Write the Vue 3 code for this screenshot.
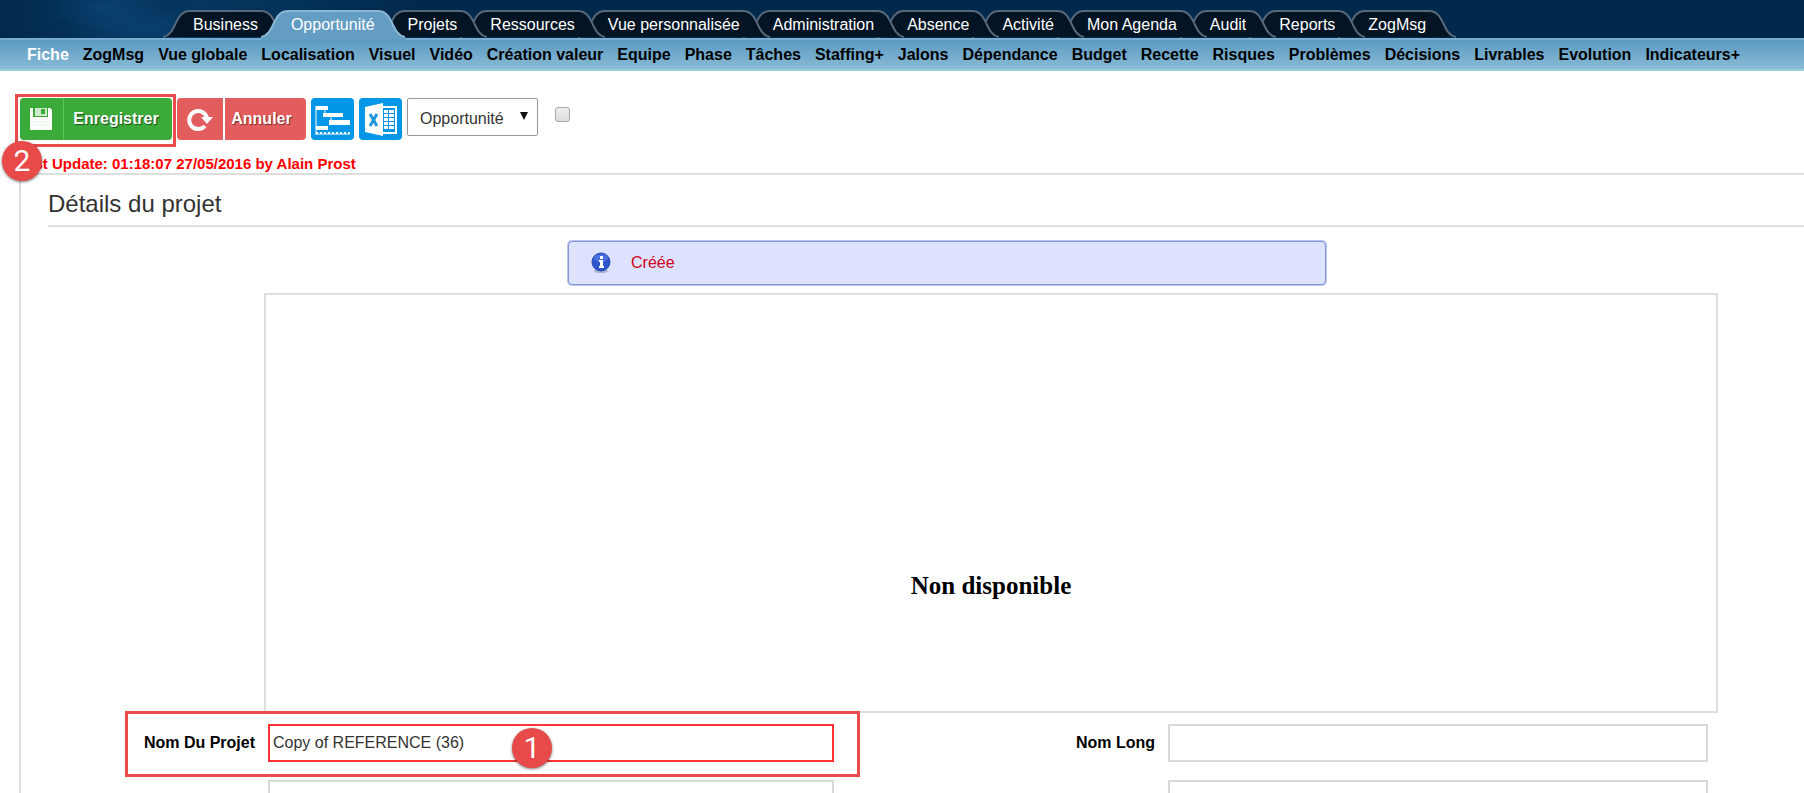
<script setup>
import { ref } from 'vue'

const tabs = ['Business', 'Opportunité', 'Projets', 'Ressources', 'Vue personnalisée', 'Administration', 'Absence', 'Activité', 'Mon Agenda', 'Audit', 'Reports', 'ZogMsg']
const activeTab = ref('Opportunité')

const links = ['Fiche', 'ZogMsg', 'Vue globale', 'Localisation', 'Visuel', 'Vidéo', 'Création valeur', 'Equipe', 'Phase', 'Tâches', 'Staffing+', 'Jalons', 'Dépendance', 'Budget', 'Recette', 'Risques', 'Problèmes', 'Décisions', 'Livrables', 'Evolution', 'Indicateurs+']
const activeLink = ref('Fiche')

const kind = ref('Opportunité')
const checked = ref(false)
const projectName = ref('Copy of REFERENCE (36)')
const longName = ref('')
</script>

<template>
  <div class="page">
    <header class="top">
      <nav class="tabs" aria-label="Modules">
        <a
          v-for="(tab, i) in tabs"
          :key="tab"
          href="#"
          class="tab"
          :class="{ active: tab === activeTab }"
          :style="{ zIndex: tab === activeTab ? 20 : tabs.length - i }"
          @click.prevent="activeTab = tab"
        >
          <svg class="cap" width="30" height="30" viewBox="0 0 30 30" aria-hidden="true">
            <path class="fill" d="M0 27 C14 25 11 1 27 1 H30 V27 H0 Z" />
            <path v-if="tab === activeTab" class="fill" d="M0 27H30V30H0Z" />
            <path class="edge" d="M0 27 C14 25 11 1 27 1 H30" />
          </svg>
          <span class="tab-text">{{ tab }}</span>
          <svg class="cap" width="30" height="30" viewBox="0 0 30 30" aria-hidden="true">
            <path class="fill" d="M0 1 H3 C19 1 16 25 30 27 H0 Z" />
            <path v-if="tab === activeTab" class="fill" d="M0 27H30V30H0Z" />
            <path class="edge" d="M0 1 H3 C19 1 16 25 30 27" />
          </svg>
        </a>
      </nav>
    </header>
    <nav class="links" aria-label="Rubriques">
      <a
        v-for="link in links"
        :key="link"
        href="#"
        :class="{ current: link === activeLink }"
        @click.prevent="activeLink = link"
      >{{ link }}</a>
    </nav>

    <main>
      <div class="toolbar">
        <div class="save-wrap">
          <button type="button" class="btn save">
            <span class="btn-icon">
              <svg width="22" height="22" viewBox="0 0 22 22" aria-hidden="true">
                <path fill="#fff" d="M0 0H3V9H18V0H20L22 2V22H0Z" />
                <path fill="#cfe9cf" fill-rule="evenodd" d="M5 0H17V8H5ZM11 1V6H15V1Z" />
                <path stroke="#e3f2e3" d="M3 14H19M3 17H19" />
              </svg>
            </span>
            <span class="btn-text">Enregistrer</span>
          </button>
          <span class="badge badge-two">2</span>
        </div>
        <button type="button" class="btn cancel">
          <span class="btn-icon">
            <svg width="28" height="24" viewBox="0 0 28 24" aria-hidden="true">
              <path fill="none" stroke="#fff" stroke-width="4" d="M19 19A9 9 0 1 1 21 11" />
              <path fill="#fff" d="M15 10H27L21 17Z" />
            </svg>
          </span>
          <span class="btn-text">Annuler</span>
        </button>
        <button type="button" class="tool" aria-label="Gantt">
          <svg width="43" height="42" viewBox="0 0 43 42" aria-hidden="true">
            <path fill="#fff" d="M5 8H17V12H5ZM12 15H32V19H12ZM18 22H39V27H18ZM5 28H17V32H5Z" />
            <path fill="none" stroke="#fff" stroke-width="1" d="M5 8V37M14 12V15M20 19V22" />
            <path fill="none" stroke="#fff" stroke-width="1" d="M5 36H39" />
            <path fill="none" stroke="#fff" stroke-width="2" stroke-dasharray="2 2" d="M5 35H39" />
          </svg>
        </button>
        <button type="button" class="tool" aria-label="Excel">
          <svg width="43" height="42" viewBox="0 0 43 42" aria-hidden="true">
            <path fill="#fff" d="M6 9L24 5V38L6 34Z" />
            <path fill="none" stroke="#fff" stroke-width="2" d="M24 9H37V35H24" />
            <path fill="#fff" d="M25 12H29V15H25ZM30 12H35V15H30ZM25 16H29V19H25ZM30 16H35V19H30ZM25 20H29V23H25ZM30 20H35V23H30ZM25 24H29V27H25ZM30 24H35V27H30ZM25 28H29V31H25ZM30 28H35V31H30Z" />
            <path fill="none" stroke="#2196d8" stroke-width="3" d="M11 16L18 28M18 16L11 28" />
          </svg>
        </button>
        <div class="select-wrap">
          <select v-model="kind" aria-label="Type">
            <option>Opportunité</option>
            <option>Projet</option>
          </select>
          <svg class="arrow" width="8" height="8" viewBox="0 0 8 8" aria-hidden="true"><path fill="#111" d="M0 0H8L4 8Z" /></svg>
        </div>
        <input v-model="checked" class="tick" type="checkbox" aria-label="Sélection">
      </div>
      <p class="update">Last Update: 01:18:07 27/05/2016 by Alain Prost</p>

      <section class="panel">
        <h1>Détails du projet</h1>
        <div class="notice" role="status">
          <svg width="20" height="22" viewBox="0 0 20 22" aria-hidden="true">
            <ellipse cx="10" cy="19" rx="7" ry="2" fill="#a9b2d6" />
            <circle cx="10" cy="10" r="9" fill="#2f55cc" stroke="#274bb5" />
            <ellipse cx="10" cy="6" rx="7" ry="4" fill="#4a70db" />
            <path fill="#fff" d="M9 4H12V7H9ZM8 8H12V14H13V16H8V14H9V10H8Z" />
          </svg>
          <span>Créée</span>
        </div>
        <div class="preview">Non disponible</div>
        <form class="fields" @submit.prevent>
          <label for="name">Nom Du Projet</label>
          <input id="name" v-model="projectName" class="field required" type="text">
          <label for="long">Nom Long</label>
          <input id="long" v-model="longName" class="field" type="text">
          <input class="field second-left" type="text" aria-label="Champ 3">
          <input class="field second-right" type="text" aria-label="Champ 4">
          <div class="frame"></div>
          <span class="badge badge-one">1</span>
        </form>
      </section>
    </main>
  </div>
</template>

<style>
body {
  margin: 0;
}
</style>

<style scoped>
.page {
  height: 100vh;
  overflow: hidden;
  background: #fff;
  color: #000;
  font: 16px/20px "Liberation Sans", Arial, sans-serif;
}
.top {
  height: 38px;
  padding: 10px 0 0 163px;
  box-sizing: border-box;
  background:
    radial-gradient(ellipse at center, #0c4a7f99, transparent 70%) 40px -14px / 130px 44px no-repeat,
    radial-gradient(ellipse at center, #0c4a7f88, transparent 70%) 60px 8px / 160px 40px no-repeat,
    linear-gradient(90deg, #02294c, #05325a 100px, #053760 200px, #01294c 420px);
}
.tabs {
  display: flex;
}
.tab {
  display: flex;
  flex: none;
  position: relative;
  height: 30px;
  color: #fff;
  text-decoration: none;
}
.tab + .tab {
  margin-left: -27px;
}
.cap {
  display: block;
  flex: none;
}
.tab .fill {
  fill: #031424;
}
.tab .edge {
  fill: none;
  stroke: #56687a;
  stroke-width: 2;
}
.tab.active .fill {
  fill: #649dc3;
}
.tab.active .edge {
  stroke: #8bb7d3;
}
.tab-text {
  box-sizing: border-box;
  height: 27px;
  padding-top: 3px;
  border-top: 2px solid #56687a;
  background: #031424;
  line-height: 20px;
}
.tab.active .tab-text {
  height: 30px;
  border-color: #8bb7d3;
  background: #649dc3;
}
.links {
  display: flex;
  gap: 14px;
  box-sizing: border-box;
  height: 33px;
  padding: 5px 27px 0;
  border-top: 2px solid #78acd0;
  border-bottom: 2px solid #9acbe0;
  background: linear-gradient(#5b99c2, #89bbd5);
  font-weight: bold;
  white-space: nowrap;
}
.links a {
  color: #000;
  text-decoration: none;
  line-height: 20px;
}
.links a.current {
  color: #fff;
}
main {
  padding: 23px 0 0 15px;
}
.toolbar {
  display: flex;
  align-items: flex-start;
  gap: 5px;
}
.save-wrap {
  position: relative;
  box-sizing: border-box;
  height: 53px;
  padding: 1px 1px 0 2px;
  border: 3px solid #e84c4b;
}
.badge {
  position: absolute;
  z-index: 30;
  width: 40px;
  height: 40px;
  border-radius: 50%;
  background: #e84a49;
  box-shadow: 0 1px 3px #0008;
  color: #fff;
  font: 30px/40px Roboto, sans-serif;
  text-align: center;
}
.badge-two {
  top: 44px;
  left: -16px;
}
.btn {
  display: flex;
  height: 42px;
  padding: 0;
  border: 0;
  border-radius: 4px;
  color: #fff;
  font: bold 16px/20px "Liberation Sans", Arial, sans-serif;
  text-shadow: 1px 1px 1px #0008;
}
.btn-icon {
  display: flex;
  align-items: center;
  justify-content: center;
  box-sizing: border-box;
  height: 42px;
}
.btn-text {
  padding: 11px 0;
}
.save {
  width: 152px;
  background: #3aab38;
}
.save .btn-icon {
  width: 44px;
  padding-right: 2px;
  border-right: 1px solid #5cc54c;
}
.save .btn-text {
  flex: 1;
  padding-right: 4px;
}
.cancel {
  width: 129px;
  margin: 4px 0 0 -4px;
  background: #e45d5e;
}
.cancel .btn-icon {
  width: 48px;
  border-right: 2px solid #fff;
}
.cancel .btn-text {
  flex: 1;
  padding-right: 8px;
}
.tool {
  width: 43px;
  height: 42px;
  margin-top: 4px;
  padding: 0;
  border: 0;
  border-radius: 4px;
  background: #0597e7;
}
.tool svg {
  display: block;
}
.select-wrap {
  position: relative;
  margin-top: 4px;
}
select {
  display: block;
  width: 131px;
  height: 38px;
  padding: 3px 12px 0;
  border: 1px solid #999;
  border-radius: 2px;
  background: #fff;
  color: #333;
  font: 16px/20px "Liberation Sans", Arial, sans-serif;
  appearance: none;
}
.arrow {
  position: absolute;
  top: 14px;
  right: 10px;
  pointer-events: none;
}
.tick {
  width: 15px;
  height: 15px;
  margin: 13px 0 0 12px;
  border: 1px solid #aaa;
  border-radius: 3px;
  background: linear-gradient(#eee, #dcdcdc);
  appearance: none;
}
.tick:checked {
  background: #777;
}
.update {
  margin: 7px 0 0 2px;
  color: #f00;
  font-size: 15px;
  font-weight: bold;
  line-height: 19px;
}
.panel {
  margin-left: 4px;
  padding-left: 27px;
  border-top: 2px solid #dedede;
  border-left: 2px solid #dedede;
}
h1 {
  margin: 0;
  padding: 14px 0 6px;
  border-bottom: 2px solid #dedede;
  color: #333;
  font-size: 24px;
  font-weight: normal;
  line-height: 30px;
}
.notice {
  display: flex;
  align-items: center;
  gap: 20px;
  box-sizing: border-box;
  width: 758px;
  height: 44px;
  margin: 14px 0 0 520px;
  padding-left: 22px;
  border: 1px solid #8296d8;
  border-radius: 4px;
  box-shadow: 0 0 0 1px #bcc7ef;
  background: #dce2ff;
  color: #d2001c;
}
.preview {
  box-sizing: border-box;
  height: 420px;
  margin: 8px 86px 0 216px;
  padding-top: 276px;
  border: 2px solid #dedede;
  font: bold 25px/30px "Liberation Serif", "Times New Roman", serif;
  text-align: center;
}
.fields {
  display: grid;
  grid-template-columns: 220px 566fr 334px 540fr;
  row-gap: 18px;
  align-items: center;
  position: relative;
  padding: 11px 96px 20px 0;
}
label {
  padding-right: 13px;
  font-weight: bold;
  text-align: right;
}
.field {
  box-sizing: border-box;
  width: 100%;
  height: 38px;
  padding: 0 3px;
  border: 2px solid #d9d9d9;
  background: #fff;
  color: #333;
  font: 16px/20px "Liberation Sans", Arial, sans-serif;
}
.required {
  border-color: #f33;
}
.second-left {
  grid-column: 2;
}
.second-right {
  grid-column: 4;
}
.frame {
  position: absolute;
  top: -2px;
  left: 77px;
  box-sizing: border-box;
  width: 735px;
  height: 66px;
  border: 3px solid #e84c4b;
  pointer-events: none;
}
.badge-one {
  top: 15px;
  left: 464px;
}
</style>
